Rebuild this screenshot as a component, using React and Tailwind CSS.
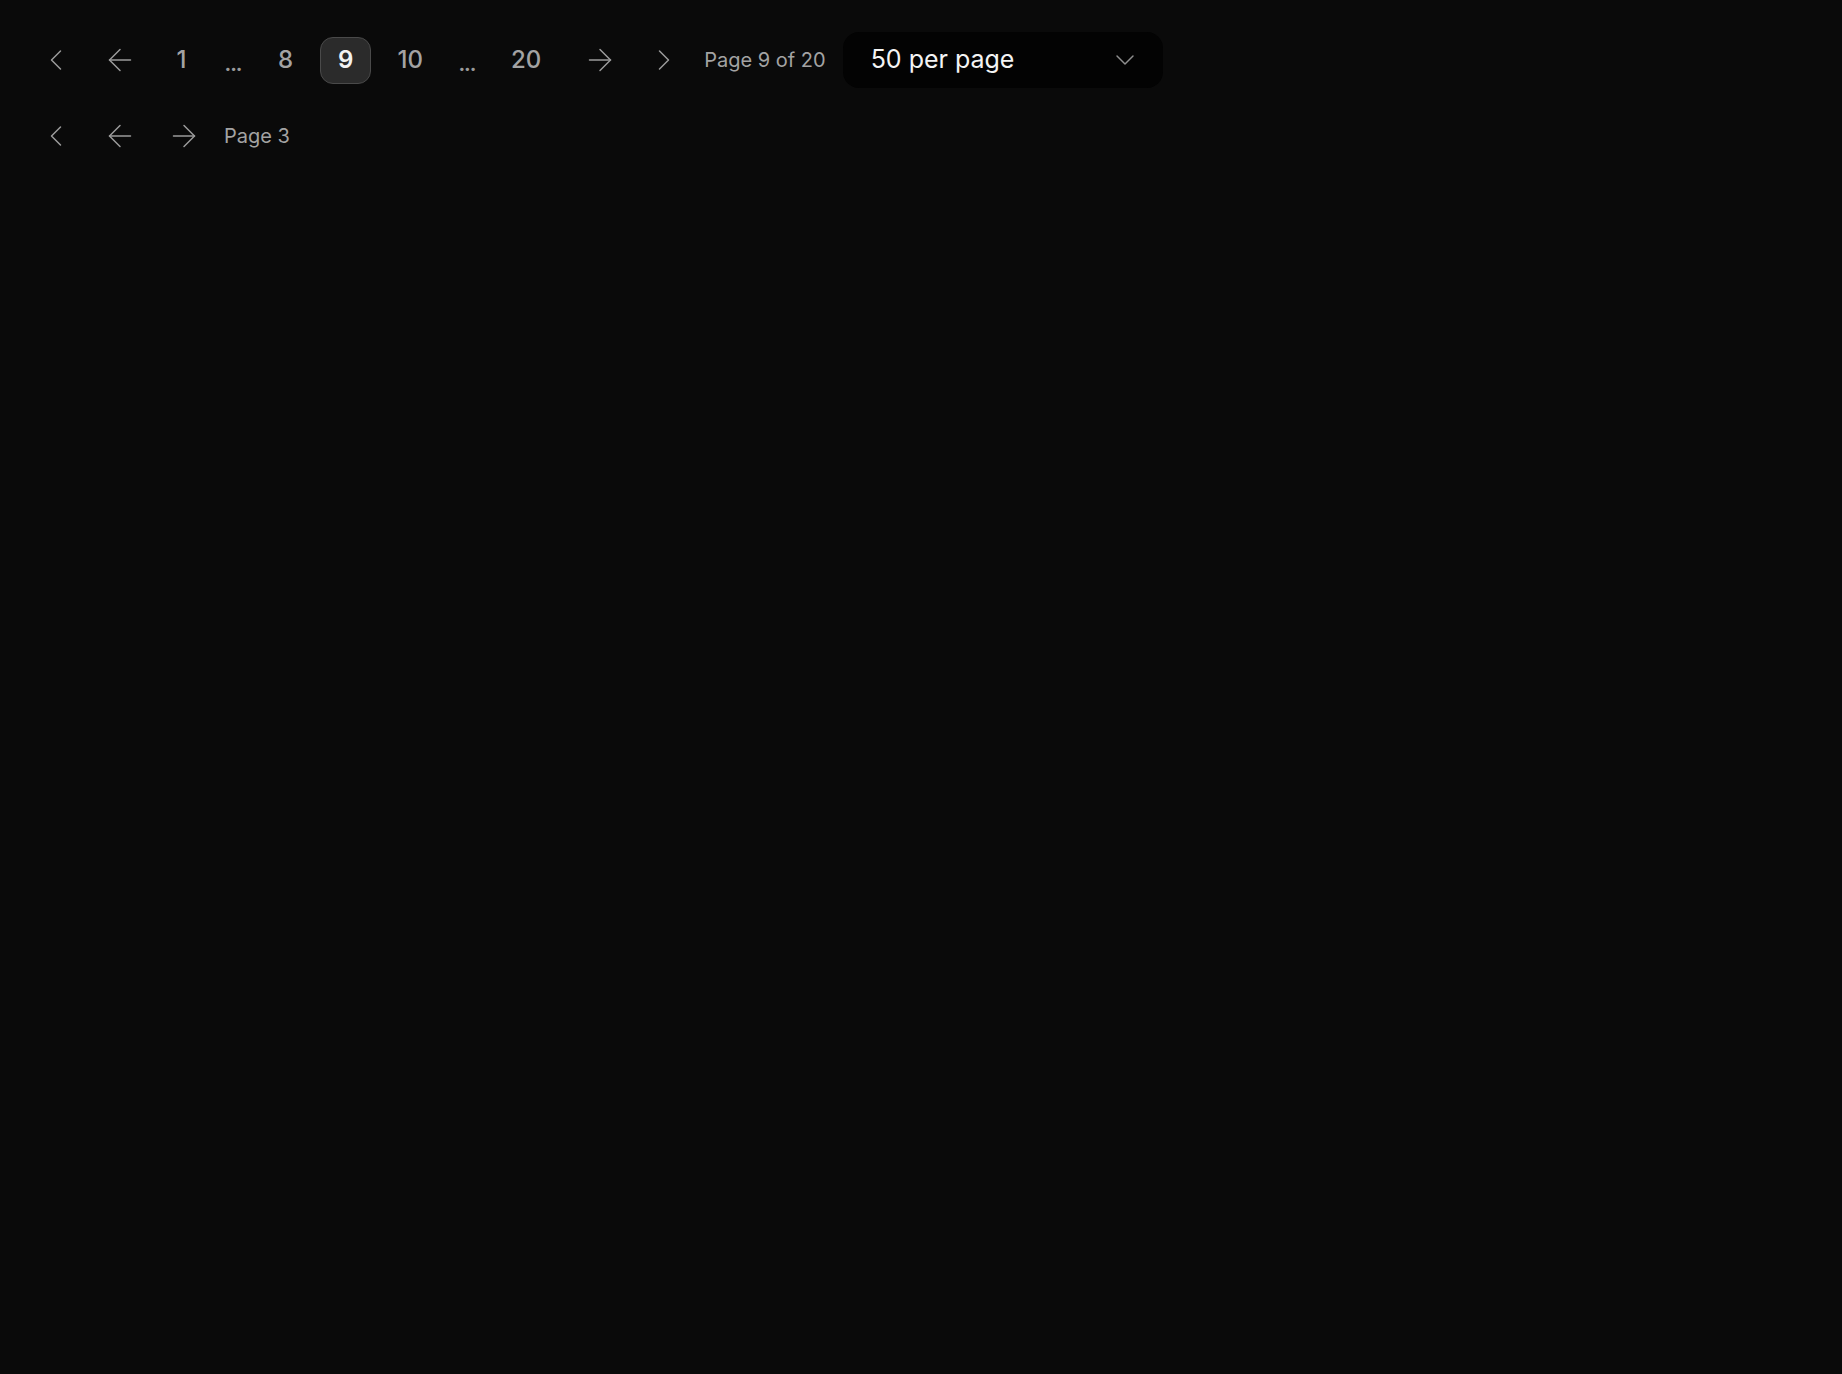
import React from "react";
import { ChevronLeft, ChevronRight, ArrowLeft, ArrowRight, ChevronDown } from "lucide-react";

const font = { fontFamily: "Inter, 'Liberation Sans', sans-serif" };

function IconBtn({ children, className = "" }) {
  return (
    <button className={"flex h-[47px] w-[56px] items-center justify-center text-[#9b9b9b] " + className}>
      {children}
    </button>
  );
}

function NumBtn({ n, active, className = "px-[19px]" }) {
  if (active) {
    return (
      <button className="flex h-[47px] min-w-[51px] items-center justify-center rounded-[13px] border-[1.5px] border-[#4a4a4a] bg-[#2b2b2b] px-[17px] text-[24px] font-semibold text-[#f2f2f2]">
        {n}
      </button>
    );
  }
  return (
    <button className={"flex h-[47px] min-w-[51px] items-center justify-center text-[24px] font-medium text-[#a3a3a3] " + className}>
      {n}
    </button>
  );
}

function Ellipsis() {
  return (
    <span className="flex h-[47px] w-[36px] items-center justify-center pt-[8px] text-[20px] font-bold leading-none tracking-[-1px] text-[#9b9b9b]">
      ...
    </span>
  );
}

export default function App() {
  return (
    <div className="min-h-screen w-full bg-[#0a0a0a]" style={font}>
      <div className="flex flex-col gap-[20px] px-[28px] pt-[32px]">
        <div className="flex h-[56px] items-center gap-[8px]">
          <IconBtn><ChevronLeft size={36} strokeWidth={1} /></IconBtn>
          <IconBtn><ArrowLeft size={36} strokeWidth={1} /></IconBtn>
          <NumBtn n="1" />
          <Ellipsis />
          <NumBtn n="8" />
          <NumBtn n="9" active />
          <NumBtn n="10" className="px-[18px]" />
          <Ellipsis />
          <NumBtn n="20" className="px-[18px]" />
          <IconBtn className="ml-[5px]"><ArrowRight size={36} strokeWidth={1} /></IconBtn>
          <IconBtn><ChevronRight size={36} strokeWidth={1} /></IconBtn>
          <span className="pl-[4px] text-[20px] text-[#a3a3a3]">Page 9 of 20</span>
          <button className="ml-[9px] flex h-[56px] w-[320px] items-center justify-between rounded-[16px] bg-[#030303] pl-[28px] pr-[22px] text-[25px] text-[#f4f4f4]">
            <span>50 per page</span>
            <ChevronDown size={32} strokeWidth={1.1} className="text-[#8f8f8f]" />
          </button>
        </div>
        <div className="flex h-[56px] items-center gap-[8px]">
          <IconBtn><ChevronLeft size={36} strokeWidth={1} /></IconBtn>
          <IconBtn><ArrowLeft size={36} strokeWidth={1} /></IconBtn>
          <IconBtn><ArrowRight size={36} strokeWidth={1} /></IconBtn>
          <span className="ml-[4px] text-[20px] text-[#a3a3a3]">Page 3</span>
        </div>
      </div>
    </div>
  );
}
